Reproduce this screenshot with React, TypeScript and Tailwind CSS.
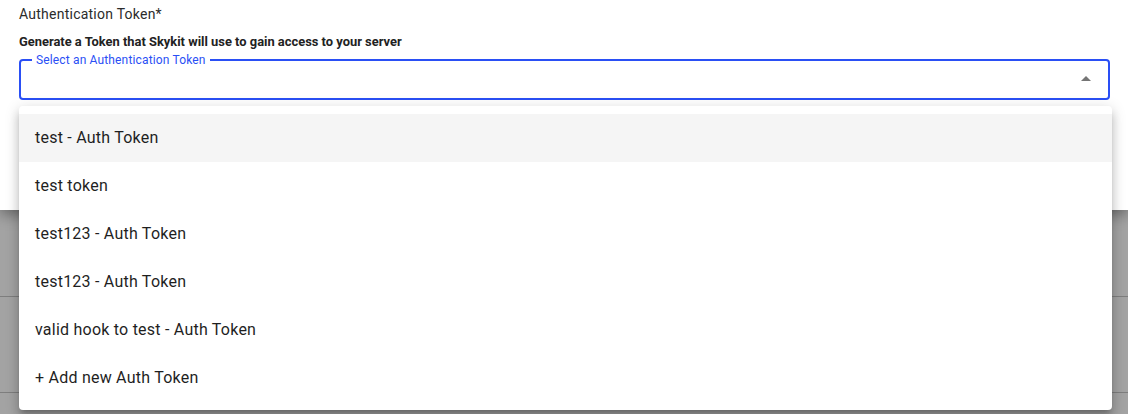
import React from "react";

const tokens = [
  "test - Auth Token",
  "test token",
  "test123 - Auth Token",
  "test123 - Auth Token",
  "valid hook to test - Auth Token",
  "+ Add new Auth Token",
];

export default function App() {
  return (
    <div
      className="relative w-[1128px] h-[414px] overflow-hidden bg-[#a3a3a3]"
      style={{ fontFamily: "Roboto, 'Liberation Sans', sans-serif" }}
    >
      {/* white form panel */}
      <div className="relative z-10 h-[210px] bg-white px-[19px] pt-[4px] shadow-[0_4px_14px_rgba(0,0,0,0.4)]">
        <div className="text-[14px] leading-[20px] tracking-[0.24px] text-[#2b2b2b]">Authentication Token*</div>
        <div className="mt-[10px] text-[12.9px] leading-[16px] font-bold text-[#222]">
          Generate a Token that Skykit will use to gain access to your server
        </div>
        <div className="relative mt-[9px] h-[41px] w-[1091px] rounded-[4px] border-2 border-[#2a4ff5]">
          <span className="absolute left-[11px] top-[-8px] bg-white px-[4px] text-[12px] leading-[14px] tracking-[0.15px] text-[#2a4ff5]">
            Select an Authentication Token
          </span>
          <svg
            className="absolute right-[17px] top-[15px]"
            width="10"
            height="5"
            viewBox="0 0 10 5"
          >
            <path d="M0 5 L5 0 L10 5 Z" fill="#757575" />
          </svg>
        </div>
      </div>

      {/* background rows */}
      <div className="h-[87px] border-b border-[#7e7e7e]" />
      <div className="h-[96px] border-b border-[#7e7e7e]" />

      {/* dropdown menu */}
      <div className="absolute left-[19px] top-[106px] z-20 w-[1093px] rounded-[4px] bg-white py-[8px] shadow-[0_5px_5px_-3px_rgba(0,0,0,0.2),0_8px_10px_1px_rgba(0,0,0,0.14),0_3px_14px_2px_rgba(0,0,0,0.12)]">
        {tokens.map((t, i) => (
          <div
            key={i}
            className={`flex h-[48px] items-center px-[16px] text-[16px] tracking-[0.23px] text-[#1f1f1f] ${
              i === 0 ? "bg-[#f5f5f5]" : ""
            }`}
          >
            {t}
          </div>
        ))}
      </div>
    </div>
  );
}
